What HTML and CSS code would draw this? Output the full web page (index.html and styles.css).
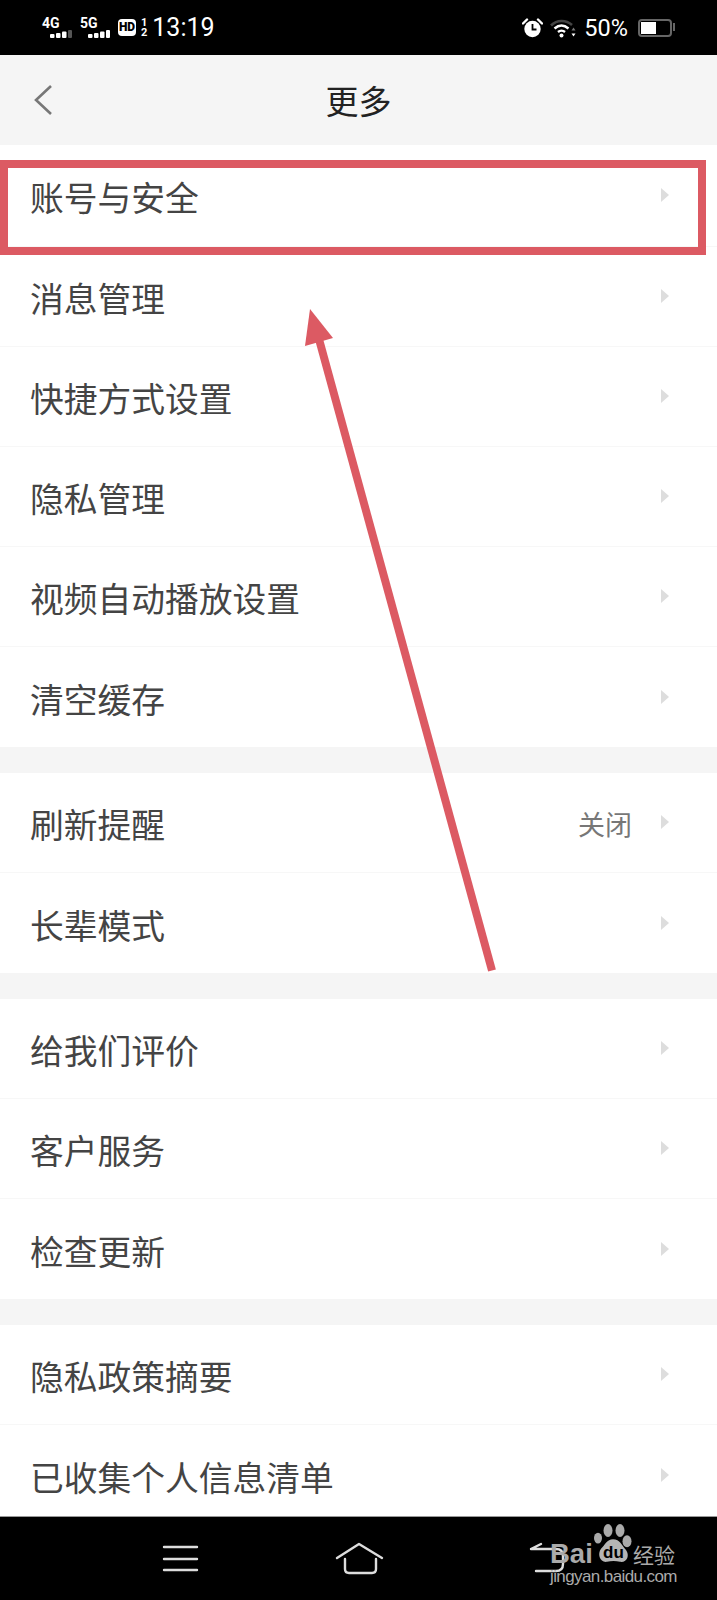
FILE: index.html
```html
<!DOCTYPE html>
<html lang="zh-CN">
<head>
    <meta charset="UTF-8">
    <meta name="viewport" content="width=device-width, initial-scale=1.0">
    <title>更多</title>
    <link rel="stylesheet" href="styles.css">
</head>
<body>
    <div class="phone">
        <!-- Status bar -->
        <div class="status-bar">
            <div class="status-left">
                <div class="signal">
                    <span class="signal-name">4G</span>
                    <svg class="signal-bars" width="22" height="8" viewBox="0 0 22 8">
                        <rect x="0" y="4" width="4.500" height="4" rx="1" fill="#fff"/>
                        <rect x="6" y="3" width="4.500" height="5" rx="1" fill="#fff"/>
                        <rect x="12" y="1.500" width="4.500" height="6.500" rx="1" fill="#fff"/>
                        <rect x="18" y="0" width="4" height="8" rx="1" fill="#555"/>
                    </svg>
                </div>
                <div class="signal">
                    <span class="signal-name">5G</span>
                    <svg class="signal-bars" width="22" height="8" viewBox="0 0 22 8">
                        <rect x="0" y="4" width="4.500" height="4" rx="1" fill="#fff"/>
                        <rect x="6" y="3" width="4.500" height="5" rx="1" fill="#fff"/>
                        <rect x="12" y="1.500" width="4.500" height="6.500" rx="1" fill="#fff"/>
                        <rect x="18" y="0" width="4" height="8" rx="1" fill="#fff"/>
                    </svg>
                </div>
                <span class="hd-badge">HD</span>
                <span class="sim-slots"><span>1</span><span>2</span></span>
                <span class="clock">13:19</span>
            </div>
            <div class="status-right">
                <svg class="icon-alarm" width="21" height="20" viewBox="0 0 21 20">
                    <circle cx="10.500" cy="11" r="8.200" fill="#fff"/>
                    <path d="M10.500 6v5.500h4" fill="none" stroke="#000" stroke-width="1.800"/>
                    <path d="M1 5.500 5 1.500M20 5.500 16 1.500" stroke="#fff" stroke-width="2.400" stroke-linecap="round"/>
                </svg>
                <svg class="icon-wifi" width="26" height="20" viewBox="0 0 26 20">
                    <path d="M1 7.500C7 1.500 16 1.500 22 7" fill="none" stroke="#444" stroke-width="2.600"/>
                    <path d="M4.500 10.500C9 6.500 14 6.500 18.500 10.500" fill="none" stroke="#fff" stroke-width="2.400"/>
                    <path d="M8 14C10 12.300 13 12.300 15 14" fill="none" stroke="#fff" stroke-width="2.400"/>
                    <circle cx="11.500" cy="17.500" r="2" fill="#fff"/>
                    <path d="M23.500 9.500 25.500 12.500H21.500Z" fill="#777"/>
                    <path d="M23.500 18.500 25.500 15.500H21.500Z" fill="#fff"/>
                </svg>
                <span class="battery-text">50%</span>
                <div class="battery">
                    <div class="battery-fill"></div>
                </div>
            </div>
        </div>

        <!-- Title bar -->
        <div class="title-bar">
            <svg class="back-icon" width="20" height="32" viewBox="0 0 20 32">
                <path d="M18 2 3 16l15 14" fill="none" stroke="#777" stroke-width="2.600"/>
            </svg>
            <h1>更多</h1>
        </div>

        <!-- Settings list -->
        <div class="settings">
            <div class="group group-first">
                <div class="row"><span class="row-label">账号与安全</span><i class="chevron"></i></div>
                <div class="row"><span class="row-label">消息管理</span><i class="chevron"></i></div>
                <div class="row"><span class="row-label">快捷方式设置</span><i class="chevron"></i></div>
                <div class="row"><span class="row-label">隐私管理</span><i class="chevron"></i></div>
                <div class="row"><span class="row-label">视频自动播放设置</span><i class="chevron"></i></div>
                <div class="row"><span class="row-label">清空缓存</span><i class="chevron"></i></div>
            </div>
            <div class="group">
                <div class="row"><span class="row-label">刷新提醒</span><span class="row-value">关闭</span><i class="chevron"></i></div>
                <div class="row"><span class="row-label">长辈模式</span><i class="chevron"></i></div>
            </div>
            <div class="group">
                <div class="row"><span class="row-label">给我们评价</span><i class="chevron"></i></div>
                <div class="row"><span class="row-label">客户服务</span><i class="chevron"></i></div>
                <div class="row"><span class="row-label">检查更新</span><i class="chevron"></i></div>
            </div>
            <div class="group">
                <div class="row"><span class="row-label">隐私政策摘要</span><i class="chevron"></i></div>
                <div class="row"><span class="row-label">已收集个人信息清单</span><i class="chevron"></i></div>
            </div>
        </div>

        <!-- Android nav bar -->
        <div class="nav-bar">
            <svg class="nav-icons" width="717" height="83" viewBox="0 0 717 83">
                <path d="M164 30h33M164 42h33M164 53h33" fill="none" stroke="#ddd" stroke-width="2.400" stroke-linecap="round"/>
                <path d="M337 41 359 27l23 14M345 42v10q0 4 4 4h23q4 0 4-4V42" fill="none" stroke="#ddd" stroke-width="2.400" stroke-linecap="round" stroke-linejoin="round"/>
                <path d="M531 32h25q7 0 7 7v8q0 7-7 7h-20M531 32l10-5" fill="none" stroke="#ddd" stroke-width="2.400" stroke-linecap="round"/>
            </svg>
        </div>

        <!-- Annotations drawn over the screenshot -->
        <div class="highlight-box"></div>
        <svg class="arrow" width="717" height="1600" viewBox="0 0 717 1600">
            <path d="M319.500 341 492 970.500" fill="none" stroke="#dc5a63" stroke-width="8"/>
            <path d="M310 309 305 346 333 338Z" fill="#dc5a63"/>
        </svg>

        <!-- Watermark -->
        <div class="watermark">
            <div class="watermark-top">
                <span class="wm-bai">Bai</span>
                <span class="wm-paw">
                    <svg width="41" height="40" viewBox="0 0 41 37" preserveAspectRatio="none">
                        <ellipse cx="6" cy="13" rx="4" ry="5" fill="#aaa"/>
                        <ellipse cx="16" cy="6" rx="4.500" ry="6" fill="#aaa"/>
                        <ellipse cx="28" cy="6" rx="4.500" ry="6" fill="#aaa"/>
                        <ellipse cx="35" cy="16" rx="4.500" ry="5.500" fill="#aaa"/>
                        <path d="M21 14C15 14 13 19 9 23 5 28 8 36 15 35 19 34 24 34 28 35 35 36 38 29 34 24 30 20 28 14 21 14Z" fill="#b5b5b5"/>
                    </svg>
                    <span class="wm-du">du</span>
                </span>
                <span class="wm-cn">经验</span>
            </div>
            <div class="wm-url">jingyan.baidu.com</div>
        </div>
    </div>
</body>
</html>
```

FILE: styles.css
```css
html, body {
    margin: 0;
    padding: 0;
    background-color: #000;
}
.phone {
    position: relative;
    width: 717px;
    height: 1600px;
    overflow: hidden;
    display: flex;
    flex-direction: column;
    background-color: #fff;
    font-family: "Noto Sans CJK SC", "Liberation Sans", sans-serif;
}

/* status bar */
.status-bar {
    height: 55px;
    flex: none;
    display: flex;
    justify-content: space-between;
    align-items: center;
    padding: 0 45px 0 42px;
    background-color: #000;
    color: #fff;
    font-family: "Roboto", "Liberation Sans", sans-serif;
}
.status-left, .status-right {
    display: flex;
    align-items: center;
}
.signal {
    width: 38px;
    height: 22px;
    display: flex;
    flex-direction: column;
}
.signal-name {
    font-size: 14px;
    line-height: 13px;
    font-weight: 700;
}
.signal-bars {
    margin: 0 0 0 8px;
}
.hd-badge {
    width: 18px;
    height: 17px;
    border-radius: 4px;
    background-color: #fff;
    color: #000;
    font-size: 12px;
    line-height: 17px;
    font-weight: 900;
    text-align: center;
    margin-right: 5px;
}
.sim-slots {
    display: flex;
    flex-direction: column;
    font-size: 11px;
    line-height: 10px;
    font-weight: 700;
    margin-right: 5px;
}
.clock {
    font-size: 25px;
    line-height: 30px;
    padding-top: 1px;
}
.icon-wifi {
    margin: 0 8px 0 7px;
}
.battery-text {
    font-size: 23.500px;
    line-height: 30px;
    padding-top: 1px;
    margin-right: 10px;
}
.battery {
    width: 28px;
    height: 12px;
    padding: 1px;
    border: 2px solid #666;
    border-radius: 4px;
    position: relative;
}
.battery::after {
    content: "";
    position: absolute;
    top: 2px;
    right: -5px;
    width: 2px;
    height: 8px;
    background-color: #666;
}
.battery-fill {
    width: 55%;
    height: 100%;
    background-color: #fff;
}

/* title bar */
.title-bar {
    height: 90px;
    flex: none;
    display: flex;
    align-items: center;
    justify-content: center;
    position: relative;
    background-color: #f5f5f5;
}
.title-bar h1 {
    margin: 0;
    font-size: 33px;
    line-height: 44px;
    font-weight: 400;
    color: #222;
}
.back-icon {
    position: absolute;
    left: 33px;
    top: 29px;
}

/* settings rows */
.settings {
    flex: 1;
    min-height: 0;
    overflow: hidden;
    background-color: #f5f5f5;
}
.group {
    margin-bottom: 26px;
    background-color: #fff;
}
.group-first {
    padding-top: 2px;
}
.row {
    height: 100px;
    box-sizing: border-box;
    display: flex;
    align-items: center;
    padding: 3px 48px 0 30px;
    border-bottom: 1px solid #f7f7f7;
}
.group-first .row:first-child {
    padding-top: 0;
}
.row:last-child {
    border-bottom: none;
}
.row-label {
    flex: 1;
    font-size: 33.750px;
    line-height: 44px;
    color: #444;
}
.row-value {
    font-size: 27px;
    line-height: 36px;
    color: #777;
    margin-right: 29px;
}
.chevron {
    width: 0;
    height: 0;
    border-top: 7px solid transparent;
    border-bottom: 7px solid transparent;
    border-left: 8px solid #ddd;
    margin-top: -4px;
}

/* nav bar */
.nav-bar {
    height: 84px;
    flex: none;
    box-sizing: border-box;
    border-top: 1px solid #999;
    background-color: #000;
}
.nav-icons {
    display: block;
}

/* annotations */
.highlight-box {
    position: absolute;
    left: 0;
    top: 160px;
    width: 690px;
    height: 79px;
    border: 8px solid #dc5a63;
}
.arrow {
    position: absolute;
    left: 0;
    top: 0;
}

/* watermark */
.watermark {
    position: absolute;
    left: 550px;
    top: 1524px;
    width: 130px;
    color: #aaa;
}
.watermark-top {
    display: flex;
    align-items: flex-end;
    height: 46px;
    margin-bottom: -4px;
}
.wm-bai {
    font-family: "Liberation Sans", sans-serif;
    font-size: 27.500px;
    line-height: 32px;
    font-weight: 700;
    width: 42px;
}
.wm-paw {
    position: relative;
    width: 41px;
    height: 46px;
}
.wm-du {
    position: absolute;
    left: 11px;
    top: 20px;
    font-family: "Liberation Sans", sans-serif;
    font-size: 17px;
    line-height: 18px;
    font-weight: 700;
    color: #000;
}
.wm-cn {
    font-size: 21px;
    line-height: 32px;
    white-space: nowrap;
}
.wm-url {
    font-family: "Liberation Sans", sans-serif;
    font-size: 17px;
    line-height: 22px;
    letter-spacing: -0.6px;
    white-space: nowrap;
}
```
